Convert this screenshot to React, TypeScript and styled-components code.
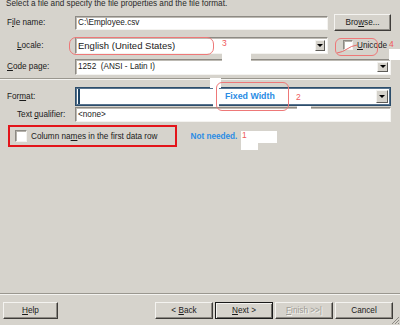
import React from "react";
import styled, { createGlobalStyle } from "styled-components";

const GlobalStyle = createGlobalStyle`
  html, body {
    margin: 0;
    padding: 0;
  }
  body {
    background: #d6d3cc;
    font-family: "Liberation Sans", Arial, sans-serif;
    font-size: 8.2px;
    color: #1a1a1a;
  }
`;

const Dialog = styled.div`
  position: relative;
  width: 400px;
  height: 325px;
  overflow: hidden;
  display: flex;
  flex-direction: column;
  background: #d6d3cc;
`;

const Intro = styled.div`
  margin-top: -2px;
  padding-left: 6px;
  height: 11px;
  line-height: 11px;
  white-space: nowrap;
  color: #2a2a2a;
`;

const Form = styled.div`
  margin-top: 5px;
  padding: 0 9px 0 7px;
  display: flex;
  flex-direction: column;
`;

interface RowProps {
  readonly $h: number;
  readonly $mt: number;
}

const Row = styled.div<RowProps>`
  display: grid;
  grid-template-columns: 62px 253px 57px;
  column-gap: 6px;
  align-items: center;
  height: ${(p) => p.$h}px;
  margin-top: ${(p) => p.$mt}px;
`;

const Label = styled.div<{ $indent?: boolean }>`
  padding-left: ${(p) => (p.$indent ? "10px" : "0")};
  white-space: nowrap;
`;

interface FieldProps {
  readonly $h: number;
  readonly $wide?: boolean;
  readonly $focus?: boolean;
  readonly $big?: boolean;
}

const Field = styled.div<FieldProps>`
  grid-column: ${(p) => (p.$wide ? "2 / 4" : "2 / 3")};
  height: ${(p) => p.$h}px;
  box-sizing: border-box;
  background: #fff;
  display: flex;
  align-items: center;
  padding-left: 2px;
  font-size: ${(p) => (p.$big ? "9.5px" : "8.2px")};
  white-space: nowrap;
  border: 1px solid;
  border-color: ${(p) =>
    p.$focus ? "#2c4d6b" : "#8d8a84 #f4f3f0 #f4f3f0 #8d8a84"};
  box-shadow: ${(p) =>
    p.$focus ? "inset 0 0 0 1px #58738d" : "inset 1px 1px 0 #bdbab3"};
`;

const FieldText = styled.span`
  flex: 1;
  overflow: hidden;
`;

const Caret = styled.span`
  width: 2px;
  align-self: stretch;
  margin: 1px 0;
  background: #1f4566;
`;

const DropButton = styled.div<{ $w: number }>`
  width: ${(p) => p.$w}px;
  align-self: stretch;
  margin: 2px;
  box-sizing: border-box;
  background: #d6d3cc;
  border: 1px solid;
  border-color: #f4f3f0 #5e5c58 #5e5c58 #f4f3f0;
  display: flex;
  align-items: center;
  justify-content: center;

  &::after {
    content: "";
    border-left: 3px solid transparent;
    border-right: 3px solid transparent;
    border-top: 3px solid #000;
  }
`;

interface ButtonProps {
  readonly $w: number;
  readonly $primary?: boolean;
  readonly $disabled?: boolean;
}

const Button = styled.div<ButtonProps>`
  width: ${(p) => p.$w}px;
  height: 17px;
  box-sizing: border-box;
  display: flex;
  align-items: center;
  justify-content: center;
  background: #d6d3cc;
  color: ${(p) => (p.$disabled ? "#9d9a94" : "#1a1a1a")};
  text-shadow: ${(p) => (p.$disabled ? "1px 1px 0 #f4f3f0" : "none")};
  border: 1px solid;
  border-color: ${(p) =>
    p.$primary ? "#1a1a1a" : "#f4f3f0 #3e3c39 #3e3c39 #f4f3f0"};
  box-shadow: ${(p) =>
    p.$primary
      ? "inset 1px 1px 0 #f4f3f0, inset -1px -1px 0 #6e6c67"
      : "inset -1px -1px 0 #8d8a84"};
  white-space: pre;
`;

const CheckArea = styled.div`
  display: flex;
  align-items: center;
  gap: 4px;
  padding-left: 9px;
`;

const CheckBox = styled.span<{ $size: number }>`
  width: ${(p) => p.$size}px;
  height: ${(p) => p.$size}px;
  box-sizing: border-box;
  background: #fff;
  border: 1px solid;
  border-color: #8d8a84 #f4f3f0 #f4f3f0 #8d8a84;
  box-shadow: inset 1px 1px 0 #b5b2ab;
  flex: none;
`;

const Separator = styled.div<{ $mt: number; $w?: number }>`
  margin-top: ${(p) => p.$mt}px;
  width: ${(p) => (p.$w ? `${p.$w}px` : "auto")};
  height: 1px;
  background: #9a978f;
  border-bottom: 1px solid #f4f3f0;
`;

const OptionRow = styled.div`
  display: flex;
  align-items: center;
  height: 22px;
  margin-top: 3px;
  padding-left: 8px;
  gap: 4px;
`;

const Note = styled.span<{ $size: number }>`
  font-weight: bold;
  font-size: ${(p) => p.$size}px;
  color: #2a8ce4;
  white-space: nowrap;
`;

const NoteSlot = styled.span`
  margin-left: 29px;
`;

const Footer = styled.div`
  margin-top: auto;
  display: flex;
  flex-direction: column;
`;

const ButtonBar = styled.div`
  display: flex;
  align-items: center;
  gap: 2px;
  margin-top: 7px;
  margin-bottom: 6px;
  padding: 0 7px 0 3px;
`;

const BarGap = styled.div`
  flex: 1;
`;

/* annotations drawn over the dialog */
const Layer = styled.div`
  position: absolute;
  inset: 0;
  pointer-events: none;
`;

interface BoxProps {
  readonly $x: number;
  readonly $y: number;
  readonly $w: number;
  readonly $h: number;
}

const Ring = styled.div<BoxProps & { $r: number; $strong?: boolean }>`
  position: absolute;
  left: ${(p) => p.$x}px;
  top: ${(p) => p.$y}px;
  width: ${(p) => p.$w}px;
  height: ${(p) => p.$h}px;
  box-sizing: border-box;
  border: ${(p) => (p.$strong ? "2px solid #e3141a" : "1px solid #ee7878")};
  border-radius: ${(p) => p.$r}px;
`;

const Patch = styled.div<BoxProps>`
  position: absolute;
  left: ${(p) => p.$x}px;
  top: ${(p) => p.$y}px;
  width: ${(p) => p.$w}px;
  height: ${(p) => p.$h}px;
  background: #fff;
`;

const Num = styled.span<{ $x: number; $y: number }>`
  position: absolute;
  left: ${(p) => p.$x}px;
  top: ${(p) => p.$y}px;
  font-size: 8.5px;
  line-height: 9px;
  color: #ef5a5a;
`;

const Floating = styled.div<{ $x: number; $y: number }>`
  position: absolute;
  left: ${(p) => p.$x}px;
  top: ${(p) => p.$y}px;
`;

const Grip = styled.svg`
  position: absolute;
  right: 0;
  bottom: 0;
`;

const App = () => {
  return (
    <>
      <GlobalStyle />
      <Dialog>
        <Intro>
          Select a file and specify the file properties and the file format.
        </Intro>
        <Form>
          <Row $h={17} $mt={0}>
            <Label>
              F<u>i</u>le name:
            </Label>
            <Field $h={14}>
              <FieldText>C:\Employee.csv</FieldText>
            </Field>
            <Button $w={57}>
              Bro<u>w</u>se...
            </Button>
          </Row>
          <Row $h={18} $mt={5}>
            <Label $indent>
              <u>L</u>ocale:
            </Label>
            <Field $h={17} $big>
              <FieldText>English (United States)</FieldText>
              <DropButton $w={10} />
            </Field>
            <CheckArea>
              <CheckBox $size={10} />
              <span>
                <u>U</u>nicode
              </span>
            </CheckArea>
          </Row>
          <Row $h={17} $mt={4}>
            <Label>
              <u>C</u>ode page:
            </Label>
            <Field $h={16} $wide>
              <FieldText>1252 &nbsp;(ANSI - Latin I)</FieldText>
              <DropButton $w={11} />
            </Field>
          </Row>
        </Form>
        <Separator $mt={3} $w={390} />
        <Form>
          <Row $h={19} $mt={2}>
            <Label>
              For<u>m</u>at:
            </Label>
            <Field $h={19} $wide $focus>
              <Caret />
              <FieldText />
              <DropButton $w={12} />
            </Field>
          </Row>
          <Row $h={15} $mt={1}>
            <Label $indent>
              Text <u>q</u>ualifier:
            </Label>
            <Field $h={15} $wide>
              <FieldText>&lt;none&gt;</FieldText>
            </Field>
          </Row>
          <OptionRow>
            <CheckBox $size={12} />
            <span>
              Column na<u>m</u>es in the first data row
            </span>
            <NoteSlot>
              <Note $size={8.2}>Not needed.</Note>
            </NoteSlot>
          </OptionRow>
        </Form>
        <Footer>
          <Separator $mt={0} />
          <ButtonBar>
            <Button $w={55}>
              <u>H</u>elp
            </Button>
            <BarGap />
            <Button $w={58}>
              {"< "}
              <u>B</u>ack
            </Button>
            <Button $w={58} $primary>
              <u>N</u>
              {"ext >"}
            </Button>
            <Button $w={58} $disabled>
              <u>F</u>
              {"inish >>|"}
            </Button>
            <Button $w={58}>Cancel</Button>
          </ButtonBar>
        </Footer>

        <Layer>
          <Ring $x={69} $y={37} $w={145} $h={18} $r={7} />
          <Patch $x={222} $y={51} $w={29} $h={12} />
          <Num $x={222} $y={39}>3</Num>

          <Ring $x={335} $y={38} $w={43} $h={18} $r={6} />
          <svg
            width="26"
            height="14"
            style={{ position: "absolute", left: 335, top: 42 }}
          >
            <path
              d="M2 11 Q 8 10 12 7 T 22 3"
              fill="none"
              stroke="#e86a6a"
              strokeWidth="1"
            />
          </svg>
          <Patch $x={389} $y={49} $w={11} $h={11} />
          <Num $x={389} $y={40}>4</Num>

          <Patch $x={210} $y={78} $w={11} $h={10} />
          <Patch $x={213} $y={88} $w={6} $h={19} />
          <Ring $x={216} $y={82} $w={73} $h={29} $r={6} />
          <Floating $x={225} $y={91}>
            <Note $size={8.8}>Fixed Width</Note>
          </Floating>
          <Patch $x={297} $y={106} $w={14} $h={6} />
          <Num $x={296} $y={93}>2</Num>

          <Ring $x={8} $y={125} $w={169} $h={22} $r={0} $strong />
          <Patch $x={241} $y={131} $w={36} $h={12} />
          <Patch $x={241} $y={143} $w={17} $h={7} />
          <Num $x={242} $y={131}>1</Num>

          <Grip width="9" height="9">
            <path
              d="M8 1 L1 8 M8 4 L4 8 M8 7 L7 8"
              stroke="#8d8a84"
              strokeWidth="1"
            />
          </Grip>
        </Layer>
      </Dialog>
    </>
  );
};

export default App;
